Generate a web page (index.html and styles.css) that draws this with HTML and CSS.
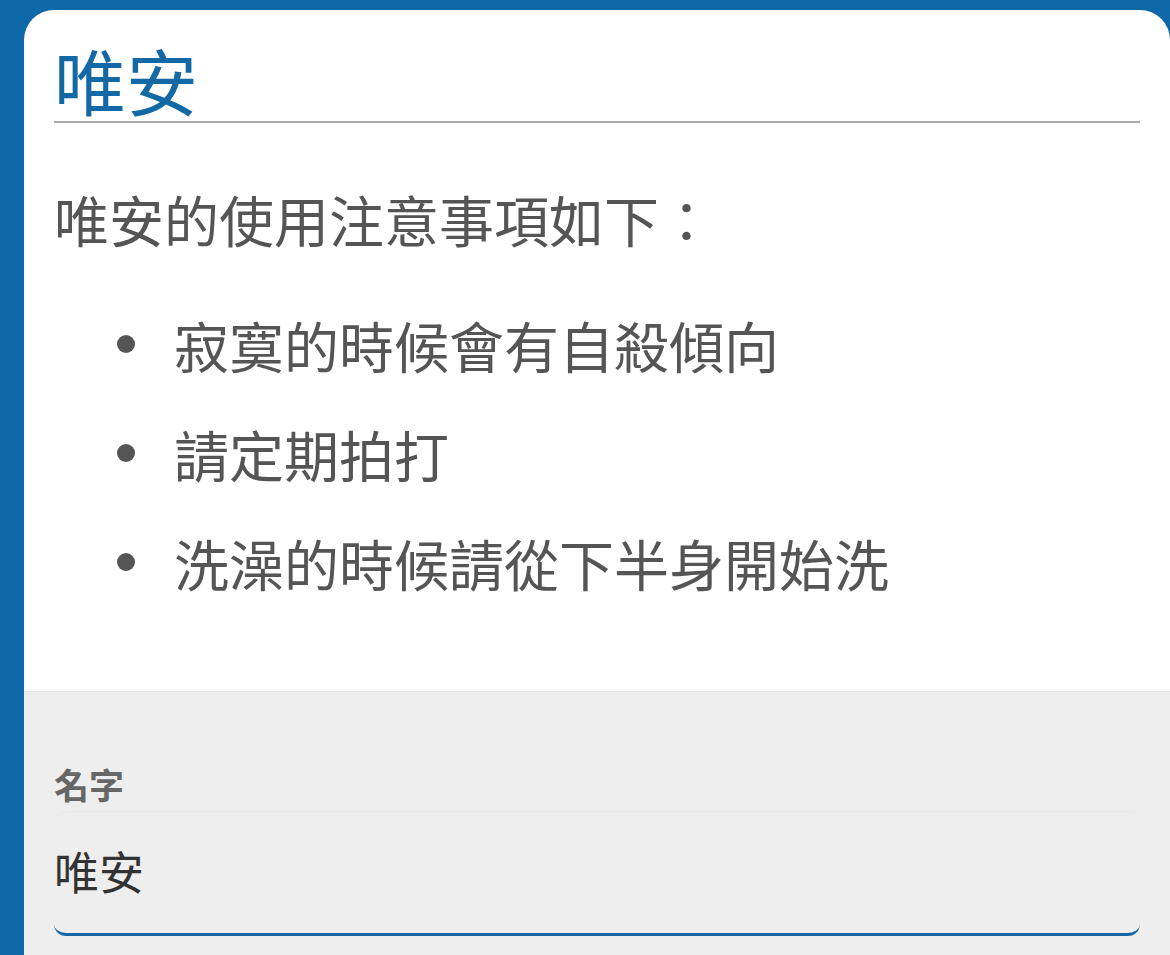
FILE: index.html
```html
<!DOCTYPE html>
<html lang="zh-Hant">
<head>
<meta charset="utf-8">
<title>唯安</title>
<link rel="stylesheet" href="styles.css">
</head>
<body>
<div class="card">
  <div class="content">
    <h1 class="title">唯安</h1>
    <p class="intro">唯安的使用注意事項如下：</p>
    <ul class="notes">
      <li class="note"><span class="dot"></span><span>寂寞的時候會有自殺傾向</span></li>
      <li class="note"><span class="dot"></span><span>請定期拍打</span></li>
      <li class="note"><span class="dot"></span><span>洗澡的時候請從下半身開始洗</span></li>
    </ul>
  </div>
  <div class="form">
    <label class="label" for="name">名字</label>
    <input class="field" id="name" type="text" value="唯安">
  </div>
</div>
</body>
</html>
```
FILE: styles.css
```css
html, body {
  margin: 0;
  padding: 0;
}
body {
  background: #0e68a8;
  padding: 10px 0 0 24px;
  height: 955px;
  box-sizing: border-box;
  overflow: hidden;
  font-family: "Noto Sans CJK TC", "Noto Sans", sans-serif;
}
.card {
  background: #ffffff;
  border-radius: 30px 30px 0 0;
  overflow: hidden;
  height: 1100px;
}
.content {
  padding: 35px 30px 0 30px;
  height: 681px;
  box-sizing: border-box;
}
.title {
  margin: 0;
  font-size: 72px;
  font-weight: 400;
  line-height: 68px;
  padding-bottom: 8px;
  color: #1368a6;
  border-bottom: 2px solid #aaaaaa;
}
.intro {
  margin: 56px 0 0 0;
  font-size: 55px;
  line-height: 78px;
  color: #555555;
}
.notes {
  list-style: none;
  margin: 48px 0 0 0;
  padding: 0;
}
.note {
  display: flex;
  align-items: center;
  font-size: 55px;
  line-height: 78px;
  color: #555555;
  margin-bottom: 31px;
}
.dot {
  width: 18px;
  height: 18px;
  border-radius: 50%;
  background: #555555;
  margin-left: 63px;
  margin-right: 39px;
  flex: none;
}
.form {
  background: #eeeeee;
  border-top: 1px solid #e6e6e6;
  padding: 71px 30px 0 30px;
  height: 500px;
}
.label {
  display: block;
  font-size: 35px;
  font-weight: 700;
  line-height: 41px;
  color: #666666;
}
.field {
  display: block;
  box-sizing: border-box;
  width: 100%;
  height: 124px;
  margin-top: 8px;
  padding: 0 2px 4px 0;
  border: none;
  border-bottom: 3px solid #1766a6;
  border-radius: 12px;
  background: #eeeeee;
  box-shadow: 0 -1px 0 -0.5px rgba(120, 130, 150, 0.08);
  font-family: "Noto Sans CJK TC", "Noto Sans", sans-serif;
  font-size: 45px;
  color: #333333;
  outline: none;
}
```
